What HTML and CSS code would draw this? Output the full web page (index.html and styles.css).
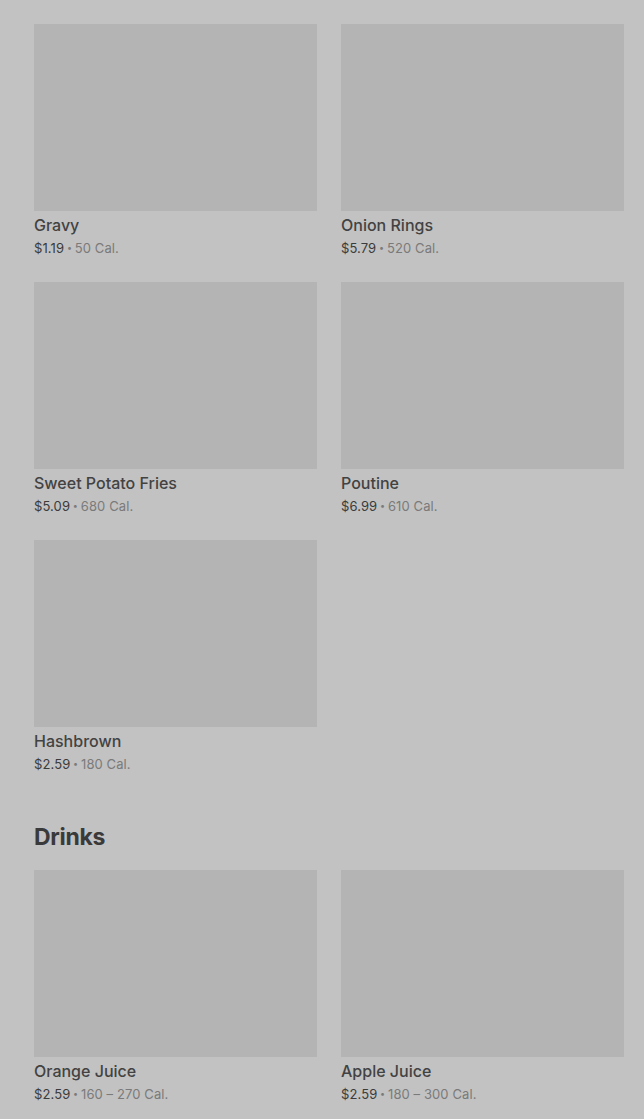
FILE: index.html
```html
<!DOCTYPE html>
<html lang="en">
<head>
    <meta charset="UTF-8">
    <meta name="viewport" content="width=device-width, initial-scale=1.0">
    <title>Menu</title>
    <link rel="stylesheet" href="styles.css">
</head>
<body>

    <section class="section first">
        <div class="grid">
            <div class="item">
                <div class="thumb"></div>
                <div class="name">Gravy</div>
                <div class="meta"><span class="price">$1.19</span> <span class="dot">•</span> <span class="cal">50 Cal.</span></div>
            </div>
            <div class="item">
                <div class="thumb"></div>
                <div class="name">Onion Rings</div>
                <div class="meta"><span class="price">$5.79</span> <span class="dot">•</span> <span class="cal">520 Cal.</span></div>
            </div>
            <div class="item">
                <div class="thumb"></div>
                <div class="name">Sweet Potato Fries</div>
                <div class="meta"><span class="price">$5.09</span> <span class="dot">•</span> <span class="cal">680 Cal.</span></div>
            </div>
            <div class="item">
                <div class="thumb"></div>
                <div class="name">Poutine</div>
                <div class="meta"><span class="price">$6.99</span> <span class="dot">•</span> <span class="cal">610 Cal.</span></div>
            </div>
            <div class="item">
                <div class="thumb"></div>
                <div class="name">Hashbrown</div>
                <div class="meta"><span class="price">$2.59</span> <span class="dot">•</span> <span class="cal">180 Cal.</span></div>
            </div>
        </div>
    </section>

    <section class="section">
        <h2>Drinks</h2>
        <div class="grid">
            <div class="item">
                <div class="thumb"></div>
                <div class="name">Orange Juice</div>
                <div class="meta"><span class="price">$2.59</span> <span class="dot">•</span> <span class="cal">160 – 270 Cal.</span></div>
            </div>
            <div class="item">
                <div class="thumb"></div>
                <div class="name">Apple Juice</div>
                <div class="meta"><span class="price">$2.59</span> <span class="dot">•</span> <span class="cal">180 – 300 Cal.</span></div>
            </div>
        </div>
    </section>

</body>
</html>
```

FILE: styles.css
```css
html, body {
    background-color: #c2c2c2;
}
body {
    font-family: Inter, "Noto Sans", sans-serif;
    margin: 0;
    padding: 24px 20px 0 34px;
    height: 1119px;
    overflow: hidden;
    box-sizing: border-box;
}
.section h2 {
    margin: 47px 0 17px;
    font-size: 23px;
    line-height: 32px;
    font-weight: 700;
    color: #3a3a3a;
    letter-spacing: -0.3px;
}
.grid {
    display: grid;
    grid-template-columns: 283px 283px;
    column-gap: 24px;
    row-gap: 24px;
}
.thumb {
    height: 187px;
    background-color: #b4b4b4;
}
.name {
    margin-top: 2px;
    font-size: 16px;
    line-height: 24px;
    font-weight: 500;
    color: #424242;
}
.meta {
    height: 20px;
    padding-top: 1px;
    font-size: 13px;
    line-height: 20px;
    color: #7a7a7a;
    letter-spacing: 0.1px;
}
.price {
    color: #3b3b3b;
}
.dot {
    display: inline-block;
    font-size: 9px;
    line-height: 0;
    margin: 0 -1px;
    vertical-align: 2px;
}
```
